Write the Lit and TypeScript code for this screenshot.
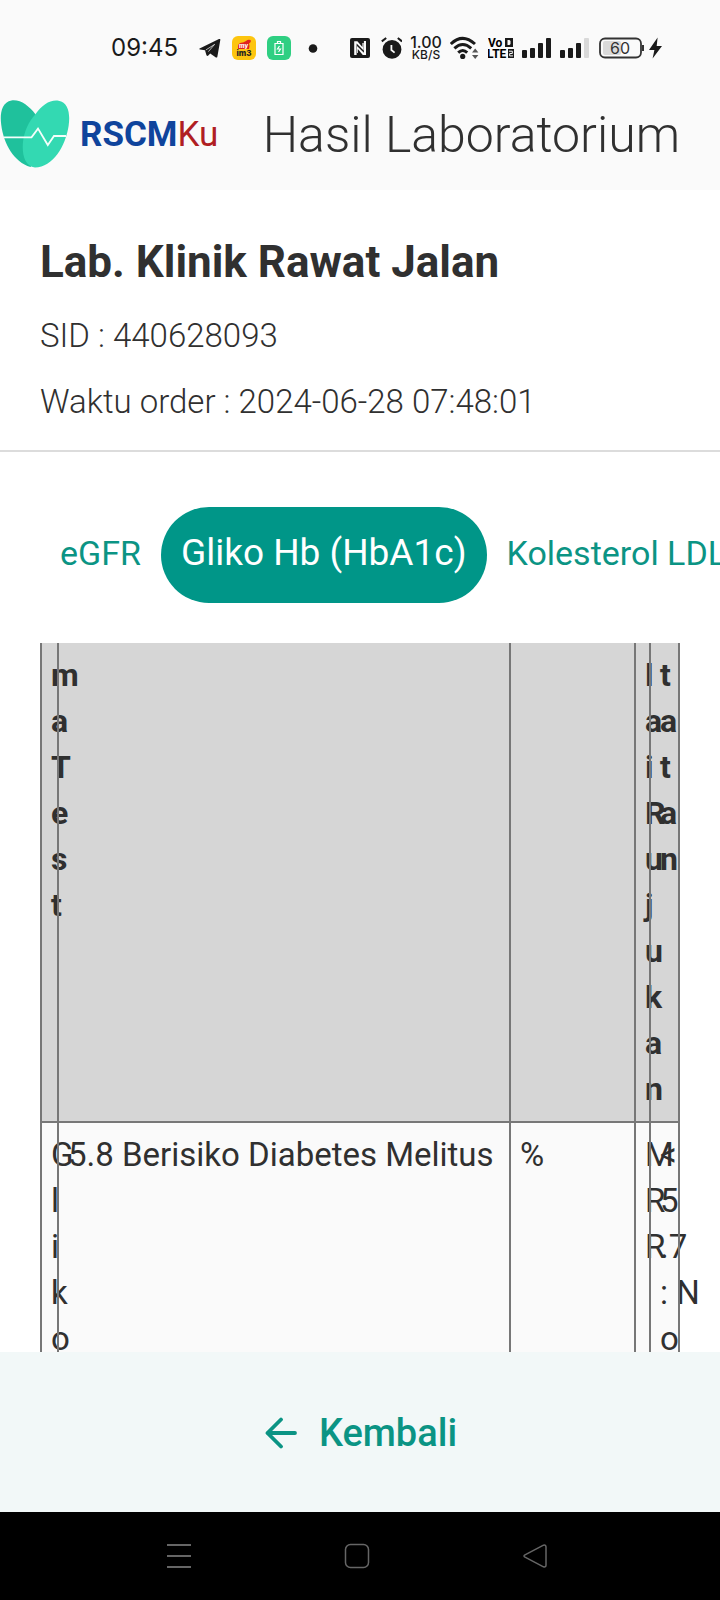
import { LitElement, html, css, svg } from "lit";
import { customElement, property, state } from "lit/decorators.js";
import { classMap } from "lit/directives/class-map.js";

@customElement("status-bar")
class StatusBar extends LitElement {
  static styles = css`
    :host {
      display: flex;
      align-items: center;
      height: 80px;
      padding: 16px 57px 0 111px;
      box-sizing: border-box;
      color: #1a1a1a;
      font-family: Inter, "Liberation Sans", sans-serif;
    }
    .time { font-size: 24px; line-height: 32px; flex: 1; }
    .group { display: flex; align-items: center; }
    .apps { gap: 11px; margin-right: 26px; }
    .system { gap: 8px; }
    .speed {
      display: flex;
      flex-direction: column;
      align-items: center;
      width: 32px;
      font-size: 16px;
      line-height: 14px;
      font-weight: 500;
    }
    .unit { font-size: 12px; line-height: 12px; }
    svg { display: block; font-family: Inter, "Liberation Sans", sans-serif; }
    .tiny { font-size: 12px; font-weight: 700; font-family: "Roboto", sans-serif; }
    .level { font-size: 16px; }
  `;

  private bars(count: number) {
    const heights = [8, 10, 15, 20];
    return heights.map(
      (h, i) => svg`<rect x=${i * 8} y=${21 - h} width="5" height=${h} rx="1"
        fill=${i < count ? "#1a1a1a" : "#d9d9d9"}></rect>`
    );
  }

  render() {
    return html`
      <span class="time">09:45</span>
      <div class="group apps">
        <svg width="22" height="22" viewBox="0 0 22 22">
          <path d="M0.6 11.4 20 2.1Q21.6 1.4 21.3 3L18.4 19.4Q18 21.4 16.2 20L11.2 16.4 9.3 18.6Q8 19.4 7.4 18L6 13.2 1 12.5Q-.3 12.1 .6 11.4Z" fill="#1a1a1a" />
          <path d="M6.8 13 15.6 7.4 9.4 14.6" fill="none" stroke="#fafafa" stroke-width="0.7" />
        </svg>
        <svg width="24" height="24" viewBox="0 0 24 24">
          <rect width="24" height="24" rx="6" fill="#fdc50f" />
          <path d="M6 13Q5 6 11 6.5L14 5Q16 3 18.5 4Q19.5 6 17 7.5Q18 10 17 13Z" fill="#e02320" />
          <text x="7" y="12" font-size="6" font-weight="800" fill="#fff">my</text>
          <text x="4.5" y="19.5" font-size="8" font-weight="800" fill="#222">im3</text>
        </svg>
        <svg width="24" height="24" viewBox="0 0 24 24">
          <rect width="24" height="24" rx="6" fill="#2fcf82" />
          <path d="M8 7.5h8v11H8zM10.5 7V5.5h3V7M12.5 10l-2 3h3l-2 3" fill="none" stroke="#fff" stroke-width="1.2" />
        </svg>
        <svg width="22" height="22" viewBox="0 0 22 22"><circle cx="11" cy="11.5" r="4.3" fill="#1a1a1a" /></svg>
      </div>
      <div class="group system">
        <svg width="22" height="22" viewBox="0 0 22 22">
          <rect y="1" width="20" height="20" rx="2" fill="#1a1a1a" />
          <path d="M4.2 18V4.2H7.4L12.4 10V6H13.6V13.6L6.6 6.4V18ZM16 4V18H12.8L7.8 12V16H7V9L13.9 15.8V4Z" fill="#fafafa" />
        </svg>
        <svg width="22" height="22" viewBox="0 0 22 22">
          <circle cx="12" cy="12.4" r="9.4" fill="#1a1a1a" />
          <path d="M1.8 4.4 6.2 1M22 4.4 17.8 1" stroke="#1a1a1a" stroke-width="2" />
          <path d="M11.4 8v5l3.2 2.6" fill="none" stroke="#fafafa" stroke-width="1.8" />
        </svg>
        <div class="speed"><span>1.00</span><span class="unit">KB/S</span></div>
        <svg width="30" height="24" viewBox="0 0 30 24">
          <g fill="none" stroke="#1a1a1a" stroke-width="3">
            <path d="M.8 8Q12.5-3.2 25 8" /><path d="M4.4 12.4Q12.7 4.6 21.2 12.4" /><path d="M8.2 16.6Q12.8 12.4 17.2 16.6" />
          </g>
          <circle cx="12.7" cy="20.4" r="2.6" fill="#1a1a1a" />
          <path d="M22 16.5 25.2 12.6l3.2 3.9zM22 19l3.2 3.9 3.2-3.9z" fill="#555" />
        </svg>
        <svg width="26" height="24" viewBox="0 0 26 24">
          <text class="tiny" x="0" y="11">Vo</text><text class="tiny" x="-1" y="22">LTE</text>
          <rect x="17" y="2" width="8" height="9" fill="#1a1a1a" /><path d="M19.5 4h2l1 1v3l-1 1h-2z" fill="#fafafa" />
          <rect x="20" y="13" width="6" height="9" fill="#1a1a1a" /><path d="M21 15.2h3.3v2.3h-2.6v2.4h3.3" fill="none" stroke="#fafafa" />
        </svg>
        <svg width="30" height="22" viewBox="0 0 30 22">${this.bars(4)}</svg>
        <svg width="31" height="22" viewBox="0 0 31 22">${this.bars(3)}</svg>
        <svg width="64" height="22" viewBox="0 0 64 22">
          <rect x="4" y="4" width="18" height="14" rx="2" fill="#dadada" />
          <rect x="1" y="1.5" width="41" height="19" rx="5" fill="none" stroke="#333" stroke-width="1.8" />
          <path d="M44 8v6" stroke="#333" stroke-width="2" />
          <text class="level" x="11" y="16.8" fill="#333">60</text>
          <path d="M58.6.5 50 13h5.4L53.6 21.5 63 9h-5.3z" fill="#1a1a1a" />
        </svg>
      </div>
    `;
  }
}

@customElement("brand-logo")
class BrandLogo extends LitElement {
  static styles = css`
    :host { display: flex; align-items: center; gap: 10px; }
    svg { display: block; }
    .name { font-size: 35px; line-height: 40px; font-weight: 700; color: #0f449c; }
    .suffix { font-weight: 400; color: #b01e23; }
  `;
  render() {
    return html`
      <svg width="70" height="70" viewBox="0 0 70 70">
        <path d="M35.4 14.2C29 5.8 20.5-.8 11.5.4 1.5 2-.2 14 1.2 24.5 3.6 44 14 62 30.5 67L50 38Z" fill="#1fc19c" />
        <path d="M35.4 14.2C42 5 50-.5 58.5.7 68.5 2.2 70.4 14 68.6 26 65.5 46 53 67.4 35 67.4 24.5 66 21.8 54 23 42 24.2 31 28.5 22 35.4 14.2Z" fill="#33d9b2" />
        <path d="M3.5 37.3H31.5L38 28.6 47.8 45 54 36H66" fill="none" stroke="#f4fffb" stroke-width="1.8" />
      </svg>
      <span class="name">RSCM<span class="suffix">Ku</span></span>
    `;
  }
}

interface Column { header: string[]; value: string[]; width?: number; }

@customElement("result-table")
class ResultTable extends LitElement {
  @property({ attribute: false }) columns: Column[] = [];

  static styles = css`
    :host { display: block; }
    table {
      width: 100%;
      table-layout: fixed;
      border-collapse: separate;
      border-spacing: 0;
      line-height: 46px;
      color: #303030;
    }
    tr { position: relative; }
    thead tr { background: #d6d6d6; }
    tbody tr { background: #fafafa; }
    th, td {
      padding: 9px 0 9px 11px;
      text-align: left;
      vertical-align: top;
      white-space: nowrap;
    }
    th { font-size: 32px; font-weight: 700; }
    td { font-size: 33px; font-weight: 400; border-top: 2px solid #777; }
    th::before, td::before {
      content: "";
      position: absolute;
      top: 0;
      bottom: 0;
      width: 2px;
      margin-left: -11px;
      background: #777;
    }
    th:last-child::after, td:last-child::after {
      content: "";
      position: absolute;
      top: 0;
      bottom: 0;
      right: 0;
      width: 2px;
      background: #777;
    }
    .line { display: block; white-space: pre; }
  `;

  private lines(parts: string[]) {
    return parts.map((p) => html`<span class="line">${p}</span>`);
  }

  render() {
    return html`
      <table>
        <colgroup>
          ${this.columns.map((c) => (c.width ? html`<col width=${c.width} />` : html`<col />`))}
        </colgroup>
        <thead><tr>${this.columns.map((c) => html`<th scope="col">${this.lines(c.header)}</th>`)}</tr></thead>
        <tbody><tr>${this.columns.map((c) => html`<td>${this.lines(c.value)}</td>`)}</tr></tbody>
      </table>
    `;
  }
}

@customElement("app-root")
class AppRoot extends LitElement {
  @state() private selected = 1;

  private tabs = ["eGFR", "Gliko Hb (HbA1c)", "Kolesterol LDL"];

  private columns: Column[] = [
    { header: [..."maTest"], value: [..."Gliko"], width: 17 },
    { header: [], value: ["5.8 Berisiko Diabetes Melitus"] },
    { header: [], value: ["%"], width: 125 },
    { header: [..."laiRujukan"], value: [..."MRR"], width: 15 },
    { header: [..."tatan"], value: ["<", "5", ".7", ": N", "o"], width: 31 },
  ];

  static styles = css`
    :host {
      display: flex;
      flex-direction: column;
      height: 100vh;
      overflow: hidden;
      background: #fff;
      color: #303030;
      font-family: Roboto, "Liberation Sans", sans-serif;
    }
    header { background: #fafafa; }
    .bar {
      display: flex;
      align-items: center;
      justify-content: space-between;
      height: 110px;
      padding-right: 40px;
    }
    h1 { margin: 0; font-size: 50px; line-height: 56px; font-weight: 300; }
    .order {
      display: flex;
      flex-direction: column;
      gap: 20px;
      padding: 41px 40px 25px;
      border-bottom: 2px solid #dcdcdc;
    }
    h2 { margin: 0; font-size: 44px; line-height: 62px; font-weight: 700; }
    p { margin: 0; font-size: 33px; line-height: 46px; font-weight: 300; }
    .tabs {
      display: flex;
      align-items: center;
      padding: 55px 40px 40px;
      overflow: hidden;
    }
    .tab {
      flex: none;
      height: 96px;
      padding: 0 20px 5px;
      border: 0;
      border-radius: 48px;
      background: none;
      color: #0b9484;
      font: 400 34px/40px Roboto, "Liberation Sans", sans-serif;
    }
    .tab.active { background: #009688; color: #fff; font-size: 37px; }
    main { flex: 1; min-height: 0; display: flex; flex-direction: column; }
    .results { flex: 1; min-height: 0; padding: 0 40px; overflow: hidden; }
    footer {
      display: flex;
      justify-content: center;
      align-items: center;
      height: 160px;
      background: #f2f8f8;
    }
    .back {
      display: flex;
      align-items: center;
      gap: 22px;
      padding: 2px 4px 0 6px;
      border: 0;
      background: none;
      color: #0b9484;
      font: 500 38px/48px Roboto, "Liberation Sans", sans-serif;
    }
    nav {
      display: flex;
      align-items: center;
      justify-content: space-around;
      height: 88px;
      padding: 0 96px 0 90px;
      background: #000;
    }
    .key { display: block; padding: 0; border: 0; background: none; }
    svg { display: block; fill: none; }
  `;

  render() {
    return html`
      <header>
        <status-bar></status-bar>
        <div class="bar">
          <brand-logo></brand-logo>
          <h1>Hasil Laboratorium</h1>
        </div>
      </header>
      <main>
        <section class="order">
          <h2>Lab. Klinik Rawat Jalan</h2>
          <p>SID : 440628093</p>
          <p>Waktu order : 2024-06-28 07:48:01</p>
        </section>
        <div class="tabs" role="tablist">
          ${this.tabs.map(
            (name, i) => html`<button
              role="tab"
              aria-selected=${i === this.selected ? "true" : "false"}
              class=${classMap({ tab: true, active: i === this.selected })}
              @click=${() => (this.selected = i)}
            >${name}</button>`
          )}
        </div>
        <div class="results"><result-table .columns=${this.columns}></result-table></div>
      </main>
      <footer>
        <button class="back">
          <svg width="32" height="32" viewBox="0 0 32 32" stroke="#0b9484" stroke-width="3.8" stroke-linecap="round" stroke-linejoin="round">
            <path d="M30 16H2.5M16 2.5 2.5 16 16 29.5" />
          </svg>
          Kembali
        </button>
      </footer>
      <nav>
        <button class="key" aria-label="Menu">
          <svg width="24" height="26" viewBox="0 0 24 26" stroke="#666" stroke-width="1.8"><path d="M0 2h24M0 13h24M0 24h24" /></svg>
        </button>
        <button class="key" aria-label="Home">
          <svg width="26" height="26" viewBox="0 0 26 26" stroke="#666" stroke-width="1.5"><rect x="1.5" y="1.5" width="23" height="23" rx="5" /></svg>
        </button>
        <button class="key" aria-label="Back">
          <svg width="24" height="24" viewBox="0 0 24 24" stroke="#666" stroke-width="1.5" stroke-linejoin="round">
            <path d="M2 10.8 20.5 1.2Q23 .5 23 3V21Q23 23.5 20.5 22.8L2 13.2Q0 12 2 10.8Z" />
          </svg>
        </button>
      </nav>
    `;
  }
}
